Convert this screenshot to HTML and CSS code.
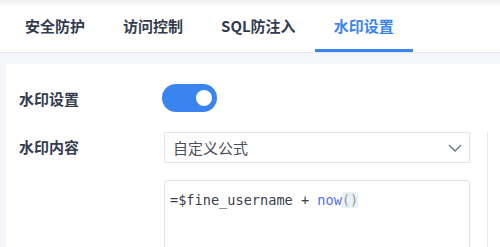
FILE: index.html
```html
<!DOCTYPE html>
<html lang="zh-CN">
<head>
    <meta charset="UTF-8">
    <title>水印设置</title>
    <link rel="stylesheet" href="styles.css">
</head>
<body>
    <div class="tabs">
        <div class="tab">安全防护</div>
        <div class="tab">访问控制</div>
        <div class="tab">SQL防注入</div>
        <div class="tab active">水印设置</div>
    </div>
    <div class="main">
        <div class="panel">
            <div class="form">
                <div class="row">
                    <div class="label">水印设置</div>
                    <div class="switch on"><span class="knob"></span></div>
                </div>
                <div class="row">
                    <div class="label">水印内容</div>
                    <div class="select">
                        <span>自定义公式</span>
                        <svg class="arrow" width="14" height="8" viewBox="0 0 14 8">
                            <path d="M1 1 L7 7 L13 1" fill="none" stroke="#6b7280" stroke-width="1.3"/>
                        </svg>
                    </div>
                </div>
                <div class="row top">
                    <div class="label"></div>
                    <div class="editor">
                        <span class="code">=$fine_username + <span class="fn">now</span><span class="paren">()</span></span>
                    </div>
                </div>
            </div>
            <div class="side"></div>
        </div>
    </div>
</body>
</html>
```

FILE: styles.css
```css
body {
    margin: 0;
    font-family: "Noto Sans CJK SC", "Noto Sans", sans-serif;
    color: #333c4e;
    background: #f5f6f9;
    overflow: hidden;
}
.tabs {
    display: flex;
    height: 52px;
    padding-left: 6px;
    background: linear-gradient(#eeeeee, #ffffff 7px);
    border-bottom: 1px solid #e3e6ec;
}
.tab {
    padding: 0 19px;
    font-size: 15px;
    font-weight: 600;
    line-height: 52px;
    height: 49px;
    overflow: visible;
    border-bottom: 3px solid transparent;
    white-space: nowrap;
}
.tab.active {
    color: #3a84ef;
    border-bottom-color: #3a84ef;
}
.main {
    padding: 11px 0 0 6px;
}
.panel {
    display: flex;
    background: #fff;
    padding-top: 20px;
    height: 300px;
}
.form {
    width: 464px;
}
.row {
    display: flex;
    align-items: center;
    margin-bottom: 18px;
}
.row.top {
    align-items: flex-start;
}
.label {
    width: 143px;
    padding-left: 13px;
    font-size: 15px;
    font-weight: 600;
    flex-shrink: 0;
}
.switch {
    width: 55px;
    height: 28px;
    border-radius: 14px;
    background: #3a84ef;
    display: flex;
    align-items: center;
    justify-content: flex-end;
    padding-right: 5px;
    box-sizing: border-box;
}
.knob {
    width: 16px;
    height: 16px;
    border-radius: 50%;
    background: #fff;
}
.select {
    margin-left: 2px;
    width: 307px;
    height: 31px;
    box-sizing: border-box;
    border: 1px solid #e3e4e8;
    display: flex;
    align-items: center;
    justify-content: space-between;
    padding: 0 7px 0 8px;
    font-size: 15px;
    color: #4a4f5a;
    margin-top: 2px;
}
.arrow {
    display: block;
}
.editor {
    margin-left: 2px;
    width: 307px;
    height: 120px;
    box-sizing: border-box;
    border: 1px solid #e3e4e8;
    border-radius: 3px;
    padding: 5px 0 0 5px;
    margin-top: -1px;
}
.code {
    font-family: "DejaVu Sans Mono", monospace;
    font-size: 13.6px;
    line-height: 18px;
    color: #3a3f4a;
    white-space: pre;
}
.fn {
    color: #4f6ff0;
}
.paren {
    color: #a49777;
    background: #e9f1fb;
}
.side {
    margin-left: 17px;
    margin-top: 48px;
    border-left: 1px solid #e6e7ea;
    flex: 1;
}
```
